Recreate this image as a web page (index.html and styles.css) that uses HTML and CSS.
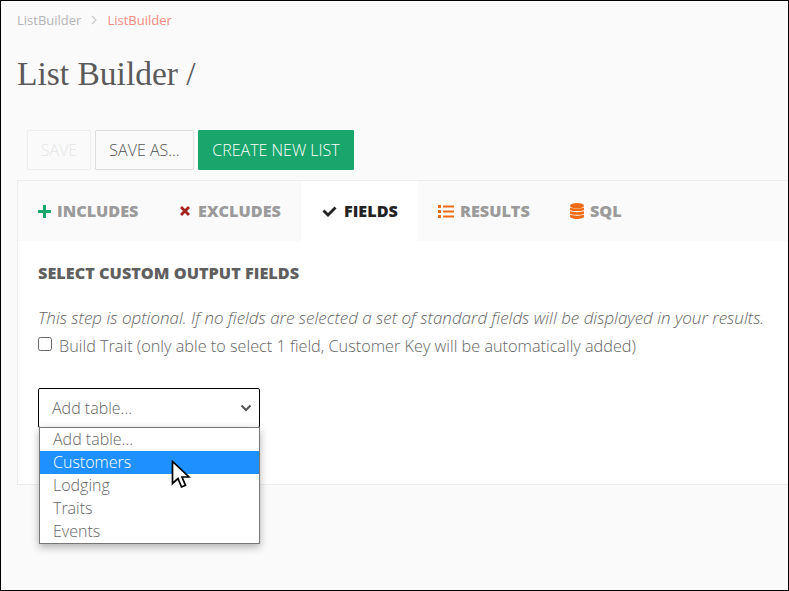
FILE: index.html
```html
<!DOCTYPE html>
<html lang="en">
<head>
<meta charset="utf-8">
<title>List Builder</title>
<link rel="stylesheet" href="styles.css">
</head>
<body>
<div class="frame">
  <nav class="crumbs">
    <span class="crumb">ListBuilder</span>
    <svg class="crumb-sep" width="6" height="10" viewBox="0 0 6 10"><path d="M1 1l4 4-4 4" fill="none" stroke="#ccc" stroke-width="1.2"/></svg>
    <span class="crumb crumb-current">ListBuilder</span>
  </nav>
  <h1 class="title">List Builder /</h1>
  <div class="actions">
    <button class="btn btn-disabled">SAVE</button>
    <button class="btn btn-save-as">SAVE AS...</button>
    <button class="btn btn-primary">CREATE NEW LIST</button>
  </div>
  <section class="panel">
    <div class="tabs">
      <div class="tab tab-includes">
        <svg width="13" height="13" viewBox="0 0 13 13"><path d="M5 0h3v5h5v3H8v5H5V8H0V5h5z" fill="#1aa56c"/></svg>
        <span>INCLUDES</span>
      </div>
      <div class="tab tab-excludes">
        <svg width="12" height="12" viewBox="0 0 12 12"><path d="M1 3l2-2 3 3 3-3 2 2-3 3 3 3-2 2-3-3-3 3-2-2 3-3z" fill="#a3231f"/></svg>
        <span>EXCLUDES</span>
      </div>
      <div class="tab tab-active tab-fields">
        <svg width="15" height="11" viewBox="0 0 15 11"><path d="M.5 5.500l2-2 3.500 3.500L12.500.5l2 2L6 11z" fill="#222"/></svg>
        <span>FIELDS</span>
      </div>
      <div class="tab tab-results">
        <svg width="16" height="13" viewBox="0 0 16 13"><path d="M0 0h3v3H0zM0 5h3v3H0zM0 10h3v3H0zM5 .5h11v2H5zM5 5.500h11v2H5zM5 10.500h11v2H5z" fill="#ee6a13"/></svg>
        <span>RESULTS</span>
      </div>
      <div class="tab tab-sql">
        <svg width="14" height="16" viewBox="0 0 14 16"><ellipse cx="7" cy="2.800" rx="7" ry="2.800" fill="#ee6a13"/><path d="M0 4.500c1.500 1.500 12.500 1.500 14 0v2.200C14 8.500 0 8.500 0 6.700zM0 8c1.500 1.500 12.500 1.500 14 0v2.500c0 1.800-14 1.800-14 0zM0 11.500c1.500 1.500 12.500 1.500 14 0v1.700c0 3.600-14 3.600-14 0z" fill="#ee6a13"/></svg>
        <span>SQL</span>
      </div>
    </div>
    <div class="panel-body">
      <h2 class="section-title">SELECT CUSTOM OUTPUT FIELDS</h2>
      <p class="hint">This step is optional. If no fields are selected a set of standard fields will be displayed in your results.</p>
      <label class="trait"><span class="check"></span>Build Trait (only able to select 1 field, Customer Key will be automatically added)</label>
      <div class="select-wrap">
        <div class="select">
          <span>Add table...</span>
          <svg width="12" height="8" viewBox="0 0 12 8"><path d="M1.500 1.500L6 6l4.500-4.500" fill="none" stroke="#555" stroke-width="2"/></svg>
        </div>
        <ul class="menu">
          <li>Add table...</li>
          <li class="menu-selected">Customers</li>
          <li>Lodging</li>
          <li>Traits</li>
          <li>Events</li>
        </ul>
        <svg class="cursor" width="20" height="29" viewBox="0 0 20 29"><path d="M1.500 1.500v22l5.500-5 3.500 8.500 4-1.700-3.500-8.300H18z" fill="#fff" stroke="#000" stroke-width="1.700"/></svg>
      </div>
    </div>
  </section>
</div>
</body>
</html>
```
FILE: styles.css
```css
* { box-sizing: border-box; }
html, body { margin: 0; padding: 0; }
body {
  width: 789px;
  height: 591px;
  overflow: hidden;
  font-family: "Open Sans", sans-serif;
  font-weight: 300;
  color: #666;
}
.frame {
  width: 789px;
  height: 591px;
  overflow: hidden;
  background: #fafafa;
  border: 1px solid #000;
  padding: 0 0 0 16px;
}
.crumbs {
  display: flex;
  align-items: center;
  height: 14px;
  margin-top: 12px;
  font-size: 13px;
  font-weight: 400;
}
.crumb { color: #b5b5b5; }
.crumb-sep { margin: 0 10px 0 10px; }
.crumb-current { color: #f58a84; }
.title {
  margin: 27px 0 0;
  height: 40px;
  font-family: "Liberation Serif", serif;
  font-weight: 400;
  font-size: 33.500px;
  line-height: 40px;
  color: #5a5a5a;
}
.actions {
  display: flex;
  gap: 4px;
  margin: 36px 0 0 10px;
  height: 40px;
}
.btn {
  height: 40px;
  padding: 0;
  font-family: "Open Sans", sans-serif;
  font-weight: 300;
  font-size: 16px;
  color: #555;
  background: #fafafa;
  border: 1px solid #ddd;
  border-radius: 1px;
}
.btn-disabled { width: 64px; color: #e6e6e6; border-color: #eee; }
.btn-save-as { width: 99px; }
.btn-primary { width: 156px; background: #19a56b; border-color: #19a56b; color: #fff; }
.panel {
  width: 800px;
  height: 305px;
  margin-top: 10px;
  background: #fff;
  border: 1px solid #eee;
}
.tabs {
  display: flex;
  height: 60px;
  background: #fafafa;
}
.tab {
  display: flex;
  align-items: center;
  gap: 6px;
  padding: 0 20px;
  font-size: 16.200px;
  font-weight: 800;
  color: #9b9b9b;
}
.tab-active { background: #fff; color: #222; }
.tab-includes { width: 141px; }
.tab-excludes { width: 142px; gap: 7px; }
.tab-fields { width: 117px; padding-left: 21px; gap: 7px; }
.tab-results { width: 132px; }
.panel-body { padding: 0 20px; }
.section-title {
  margin: 21px 0 0;
  height: 22px;
  font-size: 16.250px;
  line-height: 22px;
  font-weight: 800;
  color: #5f5f5f;
}
.hint {
  margin: 23px 0 0;
  height: 22px;
  font-size: 16.980px;
  line-height: 22px;
  font-style: italic;
  white-space: nowrap;
  color: #666;
}
.trait {
  display: flex;
  align-items: center;
  gap: 7px;
  height: 22px;
  margin-top: 6px;
  font-size: 16.250px;
  line-height: 22px;
  white-space: nowrap;
  color: #666;
}
.check {
  width: 14px;
  height: 14px;
  margin-top: -5px;
  background: #fff;
  border: 1px solid #666;
  border-radius: 2.500px;
}
.select-wrap {
  position: relative;
  width: 222px;
  margin-top: 31px;
}
.select {
  display: flex;
  align-items: center;
  justify-content: space-between;
  height: 40px;
  padding: 0 7px 0 13px;
  background: #fff;
  border: 1px solid #000;
  border-radius: 2px;
  font-size: 16px;
  color: #666;
}
.menu {
  position: absolute;
  left: 1px;
  top: 39px;
  width: 221px;
  margin: 0;
  padding: 0;
  list-style: none;
  background: #fff;
  border: 1px solid #777;
  box-shadow: 0 3px 8px rgba(0, 0, 0, 0.3);
  font-size: 16px;
}
.menu li {
  height: 23px;
  padding-left: 13px;
  line-height: 23px;
  color: #666;
}
.menu .menu-selected { background: #1e90ff; color: #fff; }
.cursor {
  position: absolute;
  left: 133px;
  top: 72px;
}
```
